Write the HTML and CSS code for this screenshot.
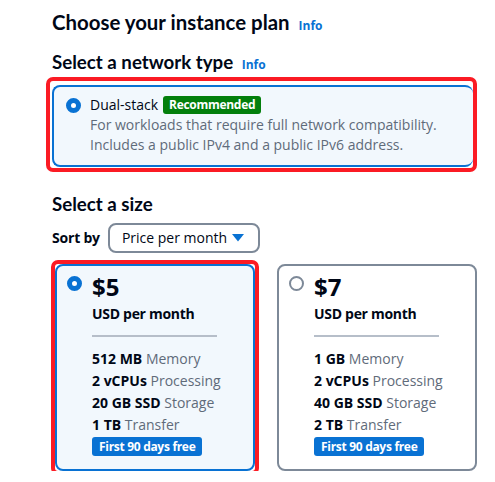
FILE: index.html
```html
<!DOCTYPE html>
<html lang="en">
<head>
<meta charset="utf-8">
<title>Choose your instance plan</title>
<link rel="stylesheet" href="styles.css">
</head>
<body>
<main class="page">
  <h1 class="title">Choose your instance plan <a class="info">Info</a></h1>
  <h2 class="subtitle net-title">Select a network type <a class="info">Info</a></h2>
  <div class="mark mark-net">
    <div class="tile net-tile">
      <span class="radio radio-on"></span>
      <div class="net-body">
        <div class="net-head"><span class="net-name">Dual-stack</span><span class="badge-green">Recommended</span></div>
        <p class="net-desc">For workloads that require full network compatibility.<br>Includes a public IPv4 and a public IPv6 address.</p>
      </div>
    </div>
  </div>
  <h2 class="subtitle size-title">Select a size</h2>
  <div class="sort-row">
    <span class="sort-label">Sort by</span>
    <div class="select">
      <span>Price per month</span>
      <svg class="caret" width="12" height="8" viewBox="0 0 12 8"><path d="M0 0h12L6 7.5z" fill="#0972d3"/></svg>
    </div>
  </div>
  <div class="plans">
    <div class="mark mark-plan">
      <div class="tile plan plan-on">
        <span class="radio radio-on plan-radio"></span>
        <div class="plan-body">
          <div class="price">$5</div>
          <div class="per">USD per month</div>
          <div class="divider"></div>
          <ul class="specs">
            <li><b>512 MB</b> Memory</li>
            <li><b>2 vCPUs</b> Processing</li>
            <li><b>20 GB SSD</b> Storage</li>
            <li><b>1 TB</b> Transfer</li>
          </ul>
          <span class="badge-blue">First 90 days free</span>
        </div>
      </div>
    </div>
    <div class="tile plan">
      <span class="radio radio-off plan-radio"></span>
      <div class="plan-body">
        <div class="price">$7</div>
        <div class="per">USD per month</div>
        <div class="divider"></div>
        <ul class="specs">
          <li><b>1 GB</b> Memory</li>
          <li><b>2 vCPUs</b> Processing</li>
          <li><b>40 GB SSD</b> Storage</li>
          <li><b>2 TB</b> Transfer</li>
        </ul>
        <span class="badge-blue">First 90 days free</span>
      </div>
    </div>
  </div>
</main>
</body>
</html>
```

FILE: styles.css
```css
* { box-sizing: border-box; }
html, body { margin: 0; padding: 0; background: #ffffff; }
body {
  font-family: "Open Sans", "Noto Sans", Arial, sans-serif;
  color: #000716;
  font-size: 14px;
  line-height: 20px;
}
.page {
  padding: 10px 18px 0 52px;
}
.title {
  margin: 0;
  font-family: Lato, "Open Sans", Arial, sans-serif;
  font-size: 20.4px;
  line-height: 24px;
  font-weight: 700;
}
.info {
  font-family: "Open Sans", Arial, sans-serif;
  color: #0972d3;
  font-size: 12px;
  line-height: 12px;
  font-weight: 700;
  margin-left: 4px;
}
.subtitle {
  margin: 0;
  font-family: Lato, "Open Sans", Arial, sans-serif;
  font-size: 18.7px;
  line-height: 22px;
  font-weight: 700;
}
.net-title { margin-top: 17px; }
.mark {
  border: 4px solid #fb1b24;
  border-radius: 7px;
}
.mark-net {
  margin: 4px 0 0 -6px;
  padding: 4px 0 1px 2px;
}
.tile {
  border: 2px solid #7d8998;
  border-radius: 8px;
  background: #ffffff;
}
.net-tile {
  border-color: #0972d3;
  background: #f2f8fd;
  display: flex;
  padding: 8px 12px 10px 12px;
  border-right: none;
}
.radio {
  flex: none;
  display: block;
  width: 15px;
  height: 15px;
  border-radius: 50%;
  background: #ffffff;
}
.radio-on { border: 5px solid #0972d3; }
.radio-off { border: 2px solid #7d8998; }
.net-tile .radio { margin-top: 3px; }
.net-body { margin-left: 9px; }
.net-head {
  display: flex;
  align-items: center;
  gap: 5px;
  height: 20px;
}
.badge-green {
  background: #037f0c;
  color: #ffffff;
  font-size: 12px;
  font-weight: 700;
  line-height: 18px;
  padding: 0 6px;
  border-radius: 3px;
  letter-spacing: -0.3px;
}
.net-desc {
  margin: 0;
  color: #5f6b7a;
}
.size-title { margin-top: 21px; }
.sort-row {
  display: flex;
  align-items: center;
  gap: 8px;
  margin-top: 8px;
}
.sort-label { font-weight: 700; letter-spacing: -0.2px; }
.select {
  width: 152px;
  height: 30px;
  border: 2px solid #7d8998;
  border-radius: 8px;
  display: flex;
  align-items: center;
  justify-content: space-between;
  padding: 0 14px 0 12px;
}
.caret { display: block; }
.plans {
  display: grid;
  grid-template-columns: 200px 200px;
  gap: 22px;
  margin: 11px 0 0 3px;
}
.mark-plan {
  margin: -4px;
  padding: 0;
}
.plan {
  display: flex;
  padding: 6px 12px 10px 10px;
  height: 207px;
}
.plan-on {
  border-color: #0972d3;
  background: #f2f8fd;
}
.plan-radio { margin-top: 4px; }
.plan-body { margin-left: 10px; }
.price {
  font-size: 24px;
  line-height: 30px;
  font-weight: 700;
}
.per {
  margin-top: 2px;
  font-weight: 700;
  letter-spacing: -0.3px;
}
.divider {
  width: 125px;
  height: 2px;
  background: #b6bec9;
  margin-top: 11px;
}
.specs {
  list-style: none;
  margin: 11px 0 0;
  padding: 0;
  line-height: 22px;
  color: #5f6b7a;
}
.specs b { color: #000716; font-weight: 700; }
.badge-blue {
  display: inline-block;
  margin-top: 1px;
  background: #0972d3;
  color: #ffffff;
  font-size: 12px;
  font-weight: 700;
  line-height: 19px;
  padding: 0 7px;
  border-radius: 3px;
  letter-spacing: -0.3px;
}
```
